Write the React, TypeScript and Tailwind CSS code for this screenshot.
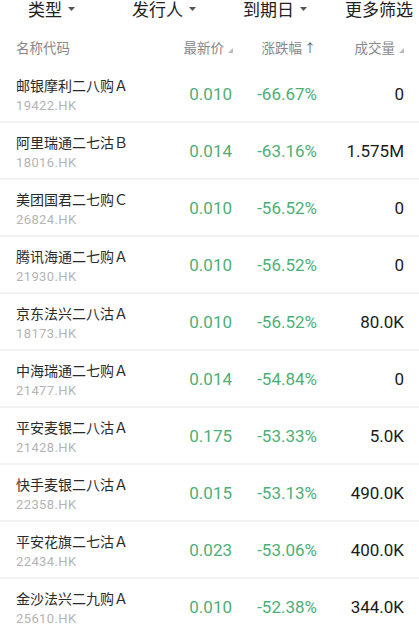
const rows = [
  { name: "邮银摩利二八购Ａ", code: "19422.HK", price: "0.010", change: "-66.67%", vol: "0" },
  { name: "阿里瑞通二七沽Ｂ", code: "18016.HK", price: "0.014", change: "-63.16%", vol: "1.575M" },
  { name: "美团国君二七购Ｃ", code: "26824.HK", price: "0.010", change: "-56.52%", vol: "0" },
  { name: "腾讯海通二七购Ａ", code: "21930.HK", price: "0.010", change: "-56.52%", vol: "0" },
  { name: "京东法兴二八沽Ａ", code: "18173.HK", price: "0.010", change: "-56.52%", vol: "80.0K" },
  { name: "中海瑞通二七购Ａ", code: "21477.HK", price: "0.014", change: "-54.84%", vol: "0" },
  { name: "平安麦银二八沽Ａ", code: "21428.HK", price: "0.175", change: "-53.33%", vol: "5.0K" },
  { name: "快手麦银二八沽Ａ", code: "22358.HK", price: "0.015", change: "-53.13%", vol: "490.0K" },
  { name: "平安花旗二七沽Ａ", code: "22434.HK", price: "0.023", change: "-53.06%", vol: "400.0K" },
  { name: "金沙法兴二九购Ａ", code: "25610.HK", price: "0.010", change: "-52.38%", vol: "344.0K" },
];

const font = { fontFamily: '"Noto Sans CJK SC", "Noto Sans", sans-serif' };
const num = { fontFamily: 'Roboto, "Noto Sans", sans-serif' };

function Caret() {
  return (
    <svg width="7" height="4" viewBox="0 0 7 4" className="ml-[6px]">
      <path d="M0 0h7L3.5 4z" fill="#555" />
    </svg>
  );
}

function SortMark() {
  return (
    <svg width="5" height="5" viewBox="0 0 5 5" className="ml-[4px] mt-[6px]">
      <path d="M5 0v5H0z" fill="#bbb" />
    </svg>
  );
}

export default function App() {
  return (
    <div className="w-[419px] h-[630px] overflow-hidden bg-white" style={font}>
      <div className="flex h-[17px] text-[17px] leading-[18px] text-[#222]">
        <div className="flex items-center w-[132px] pl-[28px]">类型<Caret /></div>
        <div className="flex items-center w-[111px]">发行人<Caret /></div>
        <div className="flex items-center w-[102px]">到期日<Caret /></div>
        <div className="flex items-center">更多筛选</div>
      </div>
      <div className="grid grid-cols-[1fr_80px_86px_86px] pl-[16px] pr-[14px] h-[49px] items-center text-[13.5px] text-[#888] pt-[12px]">
        <div>名称代码</div>
        <div className="flex justify-end items-center">最新价<SortMark /></div>
        <div className="flex justify-end items-center pr-[3px]">
          涨跌幅<span className="ml-[2px] text-[#555] text-[12px]">↑</span>
        </div>
        <div className="flex justify-end items-center pr-[1px]">成交量<SortMark /></div>
      </div>
      {rows.map((r) => (
        <div
          key={r.code}
          className="grid grid-cols-[1fr_80px_86px_86px] pl-[16px] pr-[15px] h-[57px] items-center border-b-2 border-[#f2f2f2] pt-[3px]"
        >
          <div className="flex flex-col">
            <span className="text-[14px] leading-[20px] text-[#2a2a2a]">{r.name}</span>
            <span className="text-[13px] leading-[19px] mt-[1px] tracking-[0.4px] text-[#b4b4b4]" style={num}>{r.code}</span>
          </div>
          <div className="text-right text-[17px] text-[#4daf77]" style={num}>{r.price}</div>
          <div className="text-right text-[17px] text-[#4daf77] pr-[1px]" style={num}>{r.change}</div>
          <div className="text-right text-[17px] text-[#1a1a1a]" style={num}>{r.vol}</div>
        </div>
      ))}
    </div>
  );
}
